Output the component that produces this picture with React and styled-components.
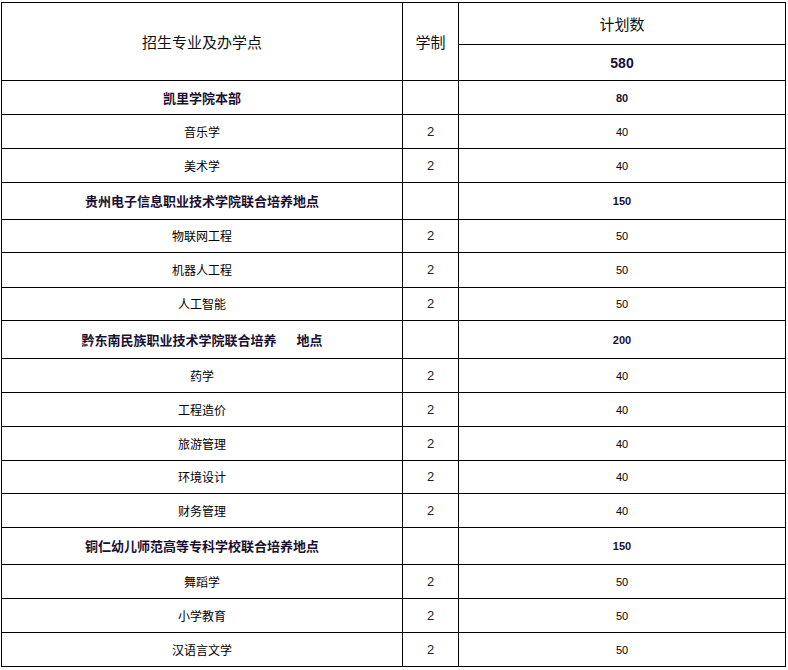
import styled, { createGlobalStyle } from "styled-components";

const GlobalStyle = createGlobalStyle`
  html, body {
    margin: 0;
    padding: 0;
    background: #ffffff;
  }
  body {
    font-family: "Noto Sans CJK SC", "Liberation Sans", sans-serif;
    color: #000000;
  }
`;

const data = [
  {
    name: "凯里学院本部",
    total: 80,
    height: 34,
    majors: [
      ["音乐学", 40],
      ["美术学", 40],
    ],
  },
  {
    name: "贵州电子信息职业技术学院联合培养地点",
    total: 150,
    height: 37,
    majors: [
      ["物联网工程", 50, 33],
      ["机器人工程", 50, 35],
      ["人工智能", 50, 33],
    ],
  },
  {
    name: "黔东南民族职业技术学院联合培养",
    tail: "地点",
    total: 200,
    height: 38,
    majors: [
      ["药学", 40],
      ["工程造价", 40],
      ["旅游管理", 40],
      ["环境设计", 40, 33],
      ["财务管理", 40],
    ],
  },
  {
    name: "铜仁幼儿师范高等专科学校联合培养地点",
    total: 150,
    height: 37,
    majors: [
      ["舞蹈学", 50],
      ["小学教育", 50],
      ["汉语言文学", 50],
    ],
  },
];

const App = () => {
  return (
    <Page>
      <GlobalStyle />
      <Table>
        <colgroup>
          <col style={{ width: "401px" }} />
          <col style={{ width: "56px" }} />
          <col style={{ width: "327px" }} />
        </colgroup>
        <tbody>
          <Row $h={42}>
            <HeadCell rowSpan={2}>招生专业及办学点</HeadCell>
            <HeadCell rowSpan={2}>学制</HeadCell>
            <HeadCell>计划数</HeadCell>
          </Row>
          <Row $h={36}>
            <TotalCell>580</TotalCell>
          </Row>
          {data.map((group) => (
            <Group key={group.name} group={group} />
          ))}
        </tbody>
      </Table>
    </Page>
  );
};

const Group = ({ group }) => (
  <>
    <Row $h={group.height}>
      <SectionCell>
        {group.name}
        {group.tail && (
          <>
            <Gap />
            {group.tail}
          </>
        )}
      </SectionCell>
      <Cell />
      <SectionNum>{group.total}</SectionNum>
    </Row>
    {group.majors.map(([major, count, h]) => (
      <Row $h={h || 34} key={major}>
        <Cell>{major}</Cell>
        <YearCell>2</YearCell>
        <NumCell>{count}</NumCell>
      </Row>
    ))}
  </>
);

const Page = styled.div`
  padding: 2px 0 0 1px;
`;

const Table = styled.table`
  width: 785px;
  table-layout: fixed;
  border-collapse: collapse;

  td {
    border: 1px solid #000000;
    text-align: center;
    vertical-align: middle;
    padding: 0;
    line-height: 16px;
  }
`;

const Row = styled.tr`
  height: ${(p) => p.$h}px;
`;

const Cell = styled.td`
  font-size: 12px;
  color: #000000;
`;

const HeadCell = styled.td`
  font-size: 15px;
  color: #111111;
`;

const TotalCell = styled.td`
  font-family: "Liberation Sans", Arial, sans-serif;
  font-size: 14px;
  font-weight: bold;
  color: #1a1030;
`;

const SectionCell = styled.td`
  font-size: 13px;
  font-weight: bold;
  color: #1a1030;
`;

const Gap = styled.span`
  display: inline-block;
  width: 20px;
`;

const SectionNum = styled.td`
  font-family: "Liberation Sans", Arial, sans-serif;
  font-size: 11px;
  font-weight: bold;
  color: #1a1030;
`;

const YearCell = styled.td`
  font-family: "Liberation Sans", Arial, sans-serif;
  font-size: 13px;
  color: #222222;
`;

const NumCell = styled.td`
  font-family: "Liberation Sans", Arial, sans-serif;
  font-size: 11px;
  color: #000000;
`;

export default App;
